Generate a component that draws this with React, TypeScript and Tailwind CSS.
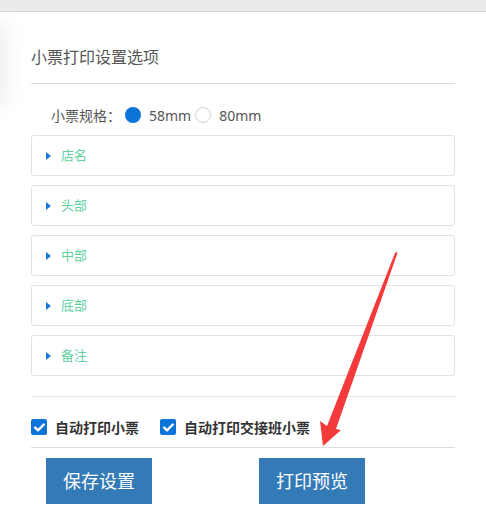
import React from "react";

const panels = ["店名", "头部", "中部", "底部", "备注"];

function Check() {
  return (
    <span className="flex justify-center items-center w-[16px] h-[16px] rounded-[2px] bg-[#0b74d9]">
      <svg width="11" height="9" viewBox="0 0 11 9">
        <path d="M1.2 4.6 L4 7.3 L9.8 1.5" fill="none" stroke="#fff" strokeWidth="2.4" strokeLinecap="round" strokeLinejoin="round" />
      </svg>
    </span>
  );
}

export default function App() {
  return (
    <div
      className="relative w-[486px] h-[528px] bg-white overflow-hidden text-[#555]"
      style={{ fontFamily: '"Noto Sans", "Noto Sans CJK SC", sans-serif' }}
    >
      <div className="h-[12px] bg-[#ebebeb] border-b border-[#d6d6d6]" />
      <div className="absolute left-[-20px] top-[20px] w-[30px] h-[90px] rounded-full bg-[#f3f3f3] blur-[8px]" />

      <div className="relative px-[31px]">
        <div className="pt-[35px] text-[16px] leading-[21px] text-[#555]">小票打印设置选项</div>
        <div className="mt-[15px] h-px bg-[#dedede]" />

        <div className="mt-[21px] pl-[20px] flex items-center h-[20px] text-[14px]">
          <span>小票规格：</span>
          <span className="ml-[4px] w-[16px] h-[16px] rounded-full bg-[#0b74d9]" />
          <span className="ml-[8px]">58mm</span>
          <span className="ml-[4px] w-[16px] h-[16px] rounded-full border border-[#d4d4d4]" />
          <span className="ml-[8px]">80mm</span>
        </div>

        <div className="mt-[10px] flex flex-col gap-[9px]">
          {panels.map((p) => (
            <div
              key={p}
              className="h-[41px] border border-[#e2e2e2] rounded-[3px] flex items-center pl-[14px]"
            >
              <svg width="5" height="8" viewBox="0 0 5 8">
                <path d="M0 0 L5 4 L0 8 Z" fill="#1a78d6" />
              </svg>
              <span className="ml-[10px] text-[13px] text-[#62cf9f]">{p}</span>
            </div>
          ))}
        </div>

        <div className="mt-[20px] h-px bg-[#e6e6e6]" />

        <div className="mt-[20px] flex items-center h-[20px] text-[14px] font-bold text-[#333]">
          <Check />
          <span className="ml-[8px]">自动打印小票</span>
          <span className="ml-[21px]">
            <Check />
          </span>
          <span className="ml-[8px]">自动打印交接班小票</span>
        </div>

        <div className="mt-[10px] h-px bg-[#dedede]" />

        <div className="mt-[10px] flex pl-[15px] gap-[107px]">
          <button className="w-[106px] h-[46px] bg-[#337ab7] text-white text-[18px]">保存设置</button>
          <button className="w-[106px] h-[46px] bg-[#337ab7] text-white text-[18px]">打印预览</button>
        </div>
      </div>

      <svg className="absolute left-0 top-0 pointer-events-none" width="486" height="528">
        <path
          d="M396.5 252 L397.5 253 L336 429 L341 430 L323 446 L320 421 L327 426 L395 253 Z"
          fill="#f43a3a"
        />
      </svg>
    </div>
  );
}
